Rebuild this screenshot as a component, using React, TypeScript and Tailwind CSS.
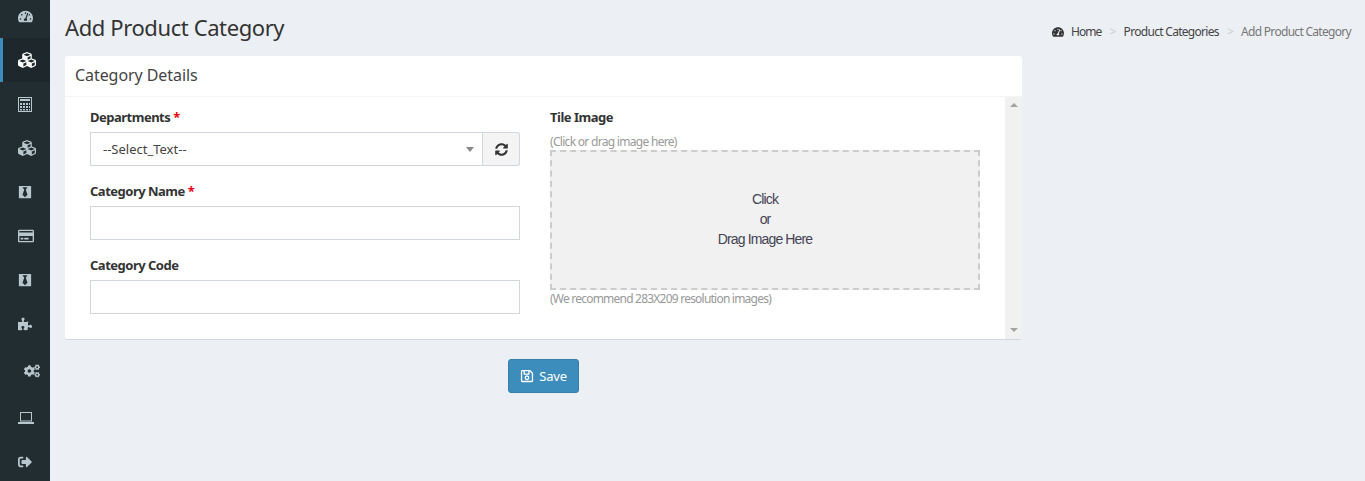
import { FaTachometerAlt, FaCubes, FaBlackTie, FaRegCreditCard, FaPuzzlePiece, FaCogs, FaSignOutAlt, FaSyncAlt, FaRegSave } from "react-icons/fa";
import type { ReactNode } from "react";

function NavItem({ children, active, className = "" }: { children: ReactNode; active?: boolean; className?: string }) {
  return (
    <div
      className={`h-[44px] flex items-center border-l-[3px] pl-[15px] ${active ? "border-[#3c8dbc] bg-[#1e282c] text-white" : "border-transparent text-[#b8c7ce]"} ${className}`}
    >
      {children}
    </div>
  );
}

function Label({ text, required }: { text: string; required?: boolean }) {
  return (
    <div className="text-[13px] leading-[20px] font-bold text-[#333] tracking-[-0.5px]">
      {text}
      {required && <span className="text-red-600"> *</span>}
    </div>
  );
}

function CalculatorIcon() {
  return (
    <svg width="14" height="15" viewBox="0 0 14 15" fill="none" className="text-[#b8c7ce]">
      <rect x="0.5" y="0.5" width="13" height="14" stroke="currentColor" />
      <rect x="2" y="2" width="10" height="2" fill="currentColor" />
      <g fill="currentColor">
        <rect x="2" y="6" width="2" height="2" />
        <rect x="5" y="6" width="2" height="2" />
        <rect x="8" y="6" width="2" height="2" />
        <rect x="11" y="6" width="1" height="2" />
        <rect x="2" y="9" width="2" height="2" />
        <rect x="5" y="9" width="2" height="2" />
        <rect x="8" y="9" width="2" height="2" />
        <rect x="11" y="9" width="1" height="2" />
        <rect x="2" y="12" width="2" height="1.5" />
        <rect x="5" y="12" width="2" height="1.5" />
        <rect x="8" y="12" width="2" height="1.5" />
        <rect x="11" y="12" width="1" height="1.5" />
      </g>
    </svg>
  );
}

function LaptopIcon() {
  return (
    <svg width="16" height="12" viewBox="0 0 16 12" fill="none">
      <rect x="2.5" y="0.5" width="11" height="8.5" stroke="currentColor" />
      <rect x="0" y="10" width="16" height="2" fill="currentColor" />
    </svg>
  );
}

export default function App() {
  return (
    <div className="flex h-[481px] overflow-hidden bg-[#ecf0f5] text-[#333] font-['Noto_Sans','Open_Sans',sans-serif]">
      <aside className="w-[50px] shrink-0 bg-[#222d32] -mt-[6px] h-[487px]">
        <NavItem><FaTachometerAlt size={15} /></NavItem>
        <NavItem active><FaCubes size={18} /></NavItem>
        <NavItem><CalculatorIcon /></NavItem>
        <NavItem><FaCubes size={18} /></NavItem>
        <NavItem><FaBlackTie size={14} /></NavItem>
        <NavItem><FaRegCreditCard size={16} /></NavItem>
        <NavItem><FaBlackTie size={14} /></NavItem>
        <NavItem><FaPuzzlePiece size={14} /></NavItem>
        <NavItem className="h-[50px] pl-[21px]"><FaCogs size={16} /></NavItem>
        <NavItem><LaptopIcon /></NavItem>
        <NavItem><FaSignOutAlt size={14} /></NavItem>
      </aside>
      <main className="flex-1 min-w-0 pl-[15px] pr-[14px]">
        <div className="flex items-center justify-between h-[56px] pb-[3px]">
          <h1 className="text-[22px] leading-[28px] text-[#333] tracking-[-0.4px]">Add Product Category</h1>
          <div className="flex items-center text-[12px] tracking-[-0.7px] mt-[11px]">
            <FaTachometerAlt size={12} className="text-[#333] mr-[7px]" />
            <span className="text-[#444] tracking-[-0.9px]">Home</span>
            <span className="text-[#ccc] mx-[8px]">&gt;</span>
            <span className="text-[#444]">Product Categories</span>
            <span className="text-[#ccc] mx-[8px]">&gt;</span>
            <span className="text-[#777]">Add Product Category</span>
          </div>
        </div>
        <div className="w-[957px]">
          <section className="bg-white rounded-[3px] border-b border-[#d2d6de] h-[284px]">
            <header className="h-[41px] border-b border-[#f4f4f4] pl-[10px] pb-[2px] flex items-center">
              <h2 className="text-[16px] leading-[20px] text-[#444] tracking-[-0.07px]">Category Details</h2>
            </header>
            <div className="flex h-[242px]">
              <div className="flex-1 flex gap-[30px] pl-[25px] pt-[10px]">
                <div className="w-[430px]">
                  <Label text="Departments" required />
                  <div className="flex mt-[5px] h-[34px]">
                    <div className="flex-1 flex items-center justify-between border border-[#d2d6de] pl-[12px] pr-[8px] text-[13px] text-[#444] pt-[1px]">
                      <span>--Select_Text--</span>
                      <span className="w-0 h-0 border-x-[4px] border-x-transparent border-t-[5px] border-t-[#888]" />
                    </div>
                    <div className="w-[37px] flex items-center justify-center bg-[#f4f4f4] border border-l-0 border-[#d2d6de] rounded-r-[3px] text-[#333]">
                      <FaSyncAlt size={13} />
                    </div>
                  </div>
                  <div className="mt-[15px]"><Label text="Category Name" required /></div>
                  <div className="mt-[5px] h-[34px] border border-[#d2d6de]" />
                  <div className="mt-[15px]"><Label text="Category Code" /></div>
                  <div className="mt-[5px] h-[34px] border border-[#d2d6de]" />
                </div>
                <div className="w-[430px]">
                  <Label text="Tile Image" />
                  <div className="mt-[7px] text-[12px] leading-[16px] text-[#999] tracking-[-0.7px]">(Click or drag image here)</div>
                  <div className="h-[140px] border-2 border-dashed border-[#ccc] bg-[#f1f1f1] flex flex-col items-center justify-center text-[14px] leading-[20px] text-[#444455] tracking-[-0.85px] font-['Liberation_Sans',sans-serif] pb-[2px]">
                    <span>Click</span>
                    <span>or</span>
                    <span>Drag Image Here</span>
                  </div>
                  <div className="mt-[1px] text-[12px] leading-[16px] text-[#999] tracking-[-0.78px]">(We recommend 283X209 resolution images)</div>
                </div>
              </div>
              <div className="w-[17px] bg-[#f1f1f1] flex flex-col items-center justify-between pt-[6px] pb-[7px]">
                <span className="w-0 h-0 border-x-[4px] border-x-transparent border-b-[4px] border-b-[#a3a3a3]" />
                <span className="w-0 h-0 border-x-[4px] border-x-transparent border-t-[4px] border-t-[#a3a3a3]" />
              </div>
            </div>
          </section>
          <div className="flex justify-center mt-[19px]">
            <button className="h-[34px] w-[71px] flex items-center justify-center gap-[5px] bg-[#3c8dbc] border border-[#367fa9] rounded-[3px] text-white text-[13px] tracking-[-0.2px]">
              <FaRegSave size={14} />
              <span className="pt-[1px]">Save</span>
            </button>
          </div>
        </div>
      </main>
    </div>
  );
}
